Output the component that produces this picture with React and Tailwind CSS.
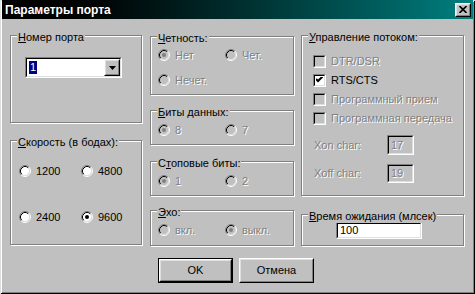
import React from "react";

const font = "font-['Liberation_Sans',Arial,sans-serif]";
const disabledText = "text-[#808080] [text-shadow:1px_1px_0_#fff]";

function Radio({ checked, disabled }) {
  return (
    <svg width="12" height="12" viewBox="0 0 12 12" className="shrink-0">
      <circle cx="6" cy="6" r="4.5" fill={disabled ? "#c0c0c0" : "#fff"} />
      <path d="M2.11 9.89 A5.5 5.5 0 0 1 9.89 2.11" stroke="#808080" fill="none" />
      <path d="M9.89 2.11 A5.5 5.5 0 0 1 2.11 9.89" stroke="#fff" fill="none" />
      <path d="M2.82 9.18 A4.5 4.5 0 0 1 9.18 2.82" stroke="#000" fill="none" />
      <path d="M9.18 2.82 A4.5 4.5 0 0 1 2.82 9.18" stroke="#dfdfdf" fill="none" />
      {checked && <circle cx="6" cy="6" r="2" fill={disabled ? "#808080" : "#000"} />}
    </svg>
  );
}

function RadioItem({ label, checked, disabled, width }) {
  return (
    <div className={`flex items-center h-[12px] ${width}`}>
      <Radio checked={checked} disabled={disabled} />
      <span className={`ml-[5px] leading-none ${disabled ? disabledText : "text-black"}`}>{label}</span>
    </div>
  );
}

function Sunken({ className, innerClass, children }) {
  return (
    <div className={`border border-t-[#808080] border-l-[#808080] border-r-white border-b-white ${className}`}>
      <div className={`w-full h-full border border-t-black border-l-black border-r-[#dfdfdf] border-b-[#dfdfdf] ${innerClass}`}>
        {children}
      </div>
    </div>
  );
}

function Raised({ className, innerClass, children }) {
  return (
    <div className={`border border-t-white border-l-white border-r-black border-b-black ${className}`}>
      <div className={`w-full h-full border border-t-[#dfdfdf] border-l-[#dfdfdf] border-r-[#808080] border-b-[#808080] bg-[#c0c0c0] ${innerClass}`}>
        {children}
      </div>
    </div>
  );
}

function CheckItem({ label, checked, disabled }) {
  return (
    <div className="flex items-center h-[13px]">
      <Sunken className="w-[13px] h-[13px] shrink-0" innerClass={`flex items-center justify-center ${disabled ? "bg-[#c0c0c0]" : "bg-white"}`}>
        {checked && (
          <svg width="7" height="7" viewBox="0 0 7 7">
            <path d="M0 2 L2 4 L7 -1" stroke="#000" strokeWidth="2" fill="none" />
          </svg>
        )}
      </Sunken>
      <span className={`ml-[5px] leading-none ${disabled ? disabledText : "text-black"}`}>{label}</span>
    </div>
  );
}

function Group({ u, rest, className, children }) {
  return (
    <div className={`relative border border-[#808080] shadow-[1px_1px_0_#fff,inset_1px_1px_0_#fff] ${className}`}>
      <div className="absolute left-[6px] top-[-5px] px-[1px] bg-[#c0c0c0] leading-[13px] text-black">
        {u && <u>{u}</u>}
        {rest}
      </div>
      {children}
    </div>
  );
}

export default function App() {
  return (
    <div className={`relative w-[475px] h-[294px] bg-[#c0c0c0] text-[11px] ${font} shadow-[inset_1px_1px_0_#dfdfdf,inset_-1px_-1px_0_#000,inset_2px_2px_0_#fff,inset_-2px_-2px_0_#808080] overflow-hidden`}>
      {/* title bar */}
      <div className="mx-[2px] h-[19px] flex items-center justify-between bg-gradient-to-r from-[#000000] to-[#008080]">
        <span className="ml-[3px] text-white font-bold text-[12px] leading-none">Параметры порта</span>
        <Raised className="w-[16px] h-[14px] mr-[2px]" innerClass="flex items-center justify-center">
          <svg width="8" height="7" viewBox="0 0 8 7">
            <path d="M0.5 0 L7.5 7 M7.5 0 L0.5 7" stroke="#000" strokeWidth="1.6" />
          </svg>
        </Raised>
      </div>

      <div className="flex pl-[10px] pt-[16px] h-[227px]">
        {/* left column */}
        <div className="flex flex-col w-[132px]">
          <Group u="Н" rest="омер порта" className="h-[88px] pl-[14px] pt-[21px]">
            <Sunken className="w-[97px] h-[21px]" innerClass="bg-white flex items-center">
              <div className="ml-[2px] px-[1px] h-[13px] bg-[#000080] text-white leading-[13px]">1</div>
              <div className="flex-1" />
              <Raised className="w-[16px] h-[17px]" innerClass="flex items-center justify-center">
                <svg width="7" height="4" viewBox="0 0 7 4">
                  <path d="M0 0 H7 L3.5 4 Z" fill="#000" />
                </svg>
              </Raised>
            </Sunken>
          </Group>
          <Group u="С" rest="корость (в бодах):" className="mt-[17px] h-[105px] pl-[8px] pt-[24px]">
            <div className="flex">
              <RadioItem label="1200" width="w-[62px]" />
              <RadioItem label="4800" />
            </div>
            <div className="flex mt-[34px]">
              <RadioItem label="2400" width="w-[62px]" />
              <RadioItem label="9600" checked />
            </div>
          </Group>
        </div>

        {/* middle column */}
        <div className="flex flex-col w-[144px] ml-[8px] mt-[1px]">
          <Group u="Ч" rest="етность:" className="h-[59px] pl-[7px] pt-[12px]">
            <div className="flex">
              <RadioItem label="Нет" checked disabled width="w-[67px]" />
              <RadioItem label="Чет." disabled />
            </div>
            <div className="flex mt-[13px]">
              <RadioItem label="Нечет." disabled />
            </div>
          </Group>
          <Group u="Б" rest="иты данных:" className="mt-[15px] h-[35px] pl-[7px] pt-[13px]">
            <div className="flex">
              <RadioItem label="8" checked disabled width="w-[67px]" />
              <RadioItem label="7" disabled />
            </div>
          </Group>
          <Group rest={<>С<u>т</u>оповые биты:</>} className="mt-[16px] h-[35px] pl-[7px] pt-[13px]">
            <div className="flex">
              <RadioItem label="1" checked disabled width="w-[67px]" />
              <RadioItem label="2" disabled />
            </div>
          </Group>
          <Group u="Э" rest="хо:" className="mt-[14px] h-[36px] pl-[7px] pt-[13px]">
            <div className="flex">
              <RadioItem label="вкл." disabled width="w-[67px]" />
              <RadioItem label="выкл." checked disabled />
            </div>
          </Group>
        </div>

        {/* right column */}
        <div className="flex flex-col w-[163px] ml-[7px]">
          <Group u="У" rest="правление потоком:" className="h-[161px] pl-[11px] pt-[19px]">
            <div className="flex flex-col gap-[6px]">
              <CheckItem label="DTR/DSR" disabled />
              <CheckItem label="RTS/CTS" checked />
              <CheckItem label="Программный прием" disabled />
              <CheckItem label="Программная передача" disabled />
            </div>
            <div className="flex items-center mt-[10px] ml-[1px]">
              <span className={`w-[73px] ${disabledText}`}>Xon char:</span>
              <Sunken className="w-[27px] h-[20px]" innerClass={`bg-[#c0c0c0] pl-[2px] leading-[16px] ${disabledText}`}>17</Sunken>
            </div>
            <div className="flex items-center mt-[9px] ml-[1px]">
              <span className={`w-[73px] ${disabledText}`}>Xoff char:</span>
              <Sunken className="w-[27px] h-[19px]" innerClass={`bg-[#c0c0c0] pl-[2px] leading-[15px] ${disabledText}`}>19</Sunken>
            </div>
          </Group>
          <Group u="В" rest="ремя ожидания (млсек)" className="mt-[18px] h-[32px] pl-[34px] pt-[7px]">
            <Sunken className="w-[86px] h-[17px]" innerClass="bg-white pl-[2px] leading-[13px] text-black">100</Sunken>
          </Group>
        </div>
      </div>

      {/* buttons */}
      <div className="flex pl-[158px] mt-[12px] gap-[6px]">
        <div className="border border-black">
          <Raised className="w-[73px] h-[23px]" innerClass="flex items-center justify-center text-black text-[11px]">
            OK
          </Raised>
        </div>
        <Raised className="w-[75px] h-[25px]" innerClass="flex items-center justify-center text-black text-[11px]">
          Отмена
        </Raised>
      </div>
    </div>
  );
}
